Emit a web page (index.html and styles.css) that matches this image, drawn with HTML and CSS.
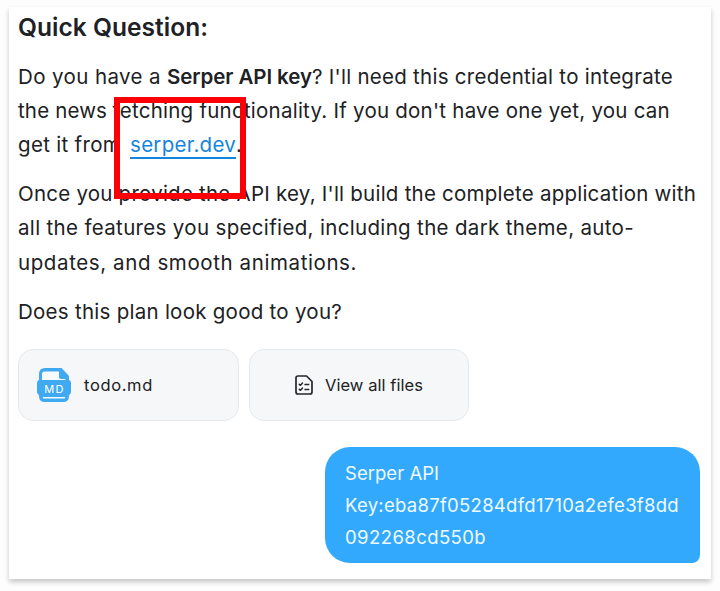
FILE: index.html
```
<!DOCTYPE html>
<html lang="en">
<head>
<meta charset="utf-8">
<title>Quick Question</title>
<link rel="stylesheet" href="styles.css">
</head>
<body>
<main class="card">
  <h1 class="heading">Quick Question:</h1>
  <section class="question">
    <p class="text">
      <span class="line"><span class="t-intro">Do you have a</span><strong class="key-name">Serper API key</strong><span class="t-need">? I'll need this credential to integrate</span></span>
      <span class="line"><span class="t-news">the news</span><span class="t-fetching">fetching functionality. If you don't have one yet, you can</span></span>
      <span class="line"><span class="t-get">get it from</span><a class="link" href="#">serper.dev</a><span>.</span></span>
    </p>
    <p class="text">
      <span class="line t-once">Once you provide the API key, I'll build the complete application with</span>
      <span class="line t-features">all the features you specified, including the dark theme, auto-</span>
      <span class="line t-updates">updates, and smooth animations.</span>
    </p>
    <p class="text"><span class="line t-plan">Does this plan look good to you?</span></p>
    <div class="highlight"></div>
  </section>
  <div class="files">
    <div class="file">
      <svg class="md-icon" viewBox="0 0 34 34">
        <path d="M8 0h16.500l7.500 8v4q2 .5 2 3V24q0 2-2 3v1q0 6-6 6H8q-6 0-6-6v-1q-2-1-2-3v-9q0-2.500 2-3V6q0-6 6-6z" fill="#3fa9f2"/>
        <path d="M7.500 3.500H22V9q0 2 2 2h4.500v1H5V6q0-2.500 2.500-2.500z" fill="#f8fbfd"/>
        <path d="M6.500 29.700h21" stroke="#f4fbff" stroke-width="1.500" stroke-linecap="round"/>
        <text class="md-label" x="17.500" y="25" text-anchor="middle">MD</text>
      </svg>
      <span class="t-todo">todo.md</span>
    </div>
    <div class="file file-all">
      <svg class="list-icon" viewBox="0 0 18 20" fill="none" stroke="#25272b" stroke-linecap="round" stroke-linejoin="round">
        <path d="M3 1h8.500L17 6.500V17q0 2-2 2H3q-2 0-2-2V3q0-2 2-2z" stroke-width="1.700"/>
        <path d="M4.300 9.300l1.200 1 2-2.300M10 9.600h3.700M4.300 14.300l1.200 1 2-2.300M10 14.600h3.700" stroke-width="1.500"/>
      </svg>
      <span class="t-view">View all files</span>
    </div>
  </div>
  <div class="bubble">
    <span class="line t-serper">Serper API</span>
    <span class="line t-key">Key:eba87f05284dfd1710a2efe3f8dd</span>
    <span class="line t-tail">092268cd550b</span>
  </div>
</main>
</body>
</html>
```
FILE: styles.css
```
* { box-sizing: border-box; }
body {
  margin: 0;
  padding: 7px 9px 12px;
  background: #fdfdfd;
  color: #202124;
  font-family: Inter, "Liberation Sans", sans-serif;
}
.card {
  display: flex;
  flex-direction: column;
  height: 572px;
  padding: 0 11px 0 9px;
  background: #fff;
  box-shadow: 0 3px 5px rgba(0, 0, 0, .22);
}
.heading {
  margin: 0;
  padding-top: 2px;
  font-size: 24.5px;
  font-weight: 600;
  line-height: 36px;
  letter-spacing: .04px;
}
.question { position: relative; padding-top: 14.6px; }
.text {
  margin: 0 0 15px;
  font-size: 20.5px;
  line-height: 34.2px;
}
.line { display: flex; white-space: nowrap; }
.key-name { margin-left: 6px; font-weight: 600; letter-spacing: -.07px; }
.link {
  margin-left: 9px;
  color: #1484dc;
  letter-spacing: .27px;
  text-decoration: underline;
  text-decoration-thickness: 1.5px;
  text-underline-offset: 5px;
}
.highlight {
  position: absolute;
  top: 52px;
  left: 96px;
  width: 132px;
  height: 102px;
  border: 6px solid #fb0007;
}
.t-intro { letter-spacing: .39px; }
.t-need { letter-spacing: .27px; }
.t-news { letter-spacing: .15px; }
.t-fetching { margin-left: 5.5px; letter-spacing: .24px; }
.t-get { letter-spacing: .31px; }
.t-once { letter-spacing: .234px; }
.t-features { letter-spacing: .335px; }
.t-updates { letter-spacing: .6px; }
.t-plan { letter-spacing: .265px; }
.files { display: flex; gap: 10px; margin-top: 5.4px; }
.file {
  display: flex;
  align-items: center;
  gap: 13px;
  width: 221px;
  height: 72px;
  padding: 0 18px;
  border: 1px solid #e6e9eb;
  border-radius: 15px;
  background: #f5f7f9;
  font-size: 16.5px;
}
.file-all { justify-content: center; gap: 12px; width: 220px; }
.md-icon { width: 34px; height: 34px; }
.md-label { fill: #fff; font-size: 11px; font-weight: 400; letter-spacing: 1.3px; }
.list-icon { width: 18px; height: 20px; }
.t-todo { letter-spacing: .64px; }
.t-view { letter-spacing: .06px; }
.bubble {
  align-self: flex-end;
  width: 375px;
  height: 116px;
  margin-top: 26px;
  padding: 10px 20px;
  border-radius: 25px 25px 8px 25px;
  background: #33a9fe;
  color: #effaff;
  font-size: 18.5px;
  line-height: 32px;
}
.t-serper { letter-spacing: .03px; }
.t-key { letter-spacing: .28px; }
.t-tail { letter-spacing: .42px; }
```
